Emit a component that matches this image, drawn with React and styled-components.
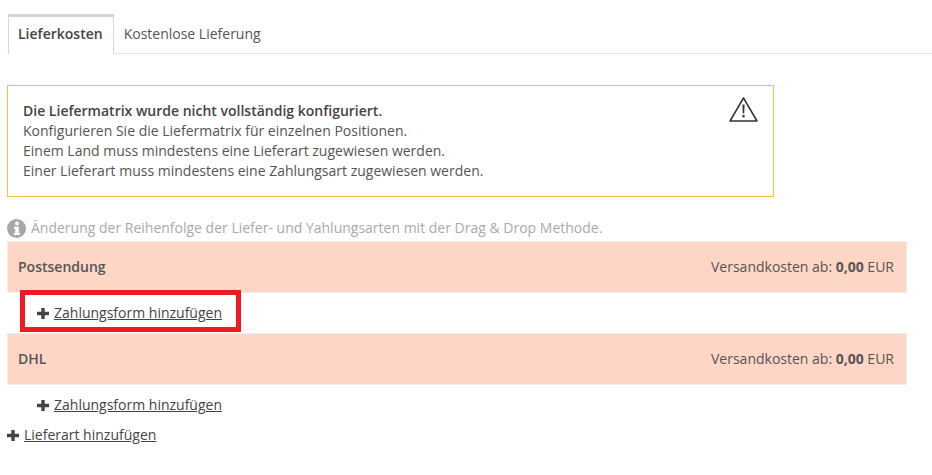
import React from 'react';
import styled, { createGlobalStyle } from 'styled-components';

const Global = createGlobalStyle`
  html, body { margin: 0; padding: 0; background: #fff; }
  body { font-family: "Open Sans", "Liberation Sans", sans-serif; font-size: 14px; line-height: 20px; color: #555; }
`;
const Page = styled.div`
  width: 932px; height: 475px; box-sizing: border-box; padding: 14px 0 0 7px; overflow: hidden; position: relative;
`;
const Tabs = styled.div`
  display: flex; height: 40px; box-sizing: border-box; border-bottom: 1px solid #e4e4e4;
`;
const Tab = styled.div`
  box-sizing: border-box; height: ${p => (p.$active ? '40px' : '39px')}; padding: ${p => (p.$active ? '7px 10px 0 9px' : '10px 10px 0')};
  margin-left: ${p => (p.$active ? '1px' : '0')};
  background: #fff;
  color: ${p => (p.$active ? '#444' : '#555')};
  font-weight: ${p => (p.$active ? 600 : 400)};
  ${p => p.$active && 'border: 1px solid #d8d8d8; border-top: 3px solid #d4d4d4; border-bottom: none;'}
`;
const Alert = styled.div`
  position: relative; box-sizing: border-box; width: 767px; height: 112px; margin-top: 31px;
  border: 1px solid #f0c24b; padding: 15px 15px 0;
`;
const AlertTitle = styled.div` font-weight: 600; color: #444; `;
const AlertIcon = styled.svg`
  position: absolute; top: 11px; right: 15px; width: 29px; height: 25px;
`;
const Hint = styled.div`
  display: flex; align-items: center; gap: 5px; margin-top: 21px; height: 20px; color: #aaa; line-height: 20px;
`;
const Bar = styled.div`
  box-sizing: border-box; width: 900px; height: 52px; margin-top: ${p => (p.$first ? '3px' : '0')}; background: #fdd6c6;
  border: 1px solid #eee;
  display: flex; align-items: center; justify-content: space-between; padding: 0 12px 0 10px; color: #555;
`;
const BarName = styled.span` font-weight: 600; `;
const Cost = styled.span` strong { font-weight: 700; } `;
const AddRow = styled.div`
  display: flex; align-items: center; gap: 5px; height: ${p => p.$h}px; padding-left: ${p => p.$indent || 0}px; color: #444;
`;
const AddLink = styled.a` color: #444; text-decoration: underline; cursor: pointer; `;
const Highlight = styled.div`
  position: absolute; left: 20px; top: 290px; width: 221px; height: 42px; box-sizing: border-box; border: 5px solid #ed1c24;
`;

const Plus = () => (
  <svg width="12" height="11" viewBox="0 0 12 11" style={{ flex: 'none' }}>
    <path d="M4.3 0h3.4v3.8H12v3.4H7.7V11H4.3V7.2H0V3.8h4.3z" fill="#444" />
  </svg>
);

export default function App() {
  return (
    <Page>
      <Global />
      <Tabs>
        <Tab $active>Lieferkosten</Tab>
        <Tab>Kostenlose Lieferung</Tab>
      </Tabs>
      <Alert>
        <AlertTitle>Die Liefermatrix wurde nicht vollständig konfiguriert.</AlertTitle>
        <div>Konfigurieren Sie die Liefermatrix für einzelnen Positionen.</div>
        <div>Einem Land muss mindestens eine Lieferart zugewiesen werden.</div>
        <div>Einer Lieferart muss mindestens eine Zahlungsart zugewiesen werden.</div>
        <AlertIcon viewBox="0 0 29 25">
          <path d="M14.5 1 L28 24 H1 Z" fill="none" stroke="#333" strokeWidth="1.5" strokeLinejoin="round" />
          <path d="M13.4 7.5h2.2l-.4 9h-1.4z" fill="#333" />
          <rect x="13.4" y="18" width="2.2" height="2.4" fill="#333" />
        </AlertIcon>
      </Alert>
      <Hint>
        <svg width="19" height="19" viewBox="0 0 19 19">
          <circle cx="9.5" cy="9.5" r="9.5" fill="#a8a8a8" />
          <circle cx="10" cy="4.6" r="2" fill="#fff" />
          <path d="M7 7.8h4.8v6.2h1.2v2H7v-2h1.2V9.8H7z" fill="#fff" />
        </svg>
        <span>Änderung der Reihenfolge der Liefer- und Yahlungsarten mit der Drag &amp; Drop Methode.</span>
      </Hint>
      <Bar $first>
        <BarName>Postsendung</BarName>
        <Cost>Versandkosten ab: <strong>0,00</strong> EUR</Cost>
      </Bar>
      <AddRow $h={40} $indent={30}><Plus /><AddLink>Zahlungsform hinzufügen</AddLink></AddRow>
      <Bar>
        <BarName>DHL</BarName>
        <Cost>Versandkosten ab: <strong>0,00</strong> EUR</Cost>
      </Bar>
      <AddRow $h={40} $indent={30}><Plus /><AddLink>Zahlungsform hinzufügen</AddLink></AddRow>
      <AddRow $h={20}><Plus /><AddLink>Lieferart hinzufügen</AddLink></AddRow>
      <Highlight />
    </Page>
  );
}
